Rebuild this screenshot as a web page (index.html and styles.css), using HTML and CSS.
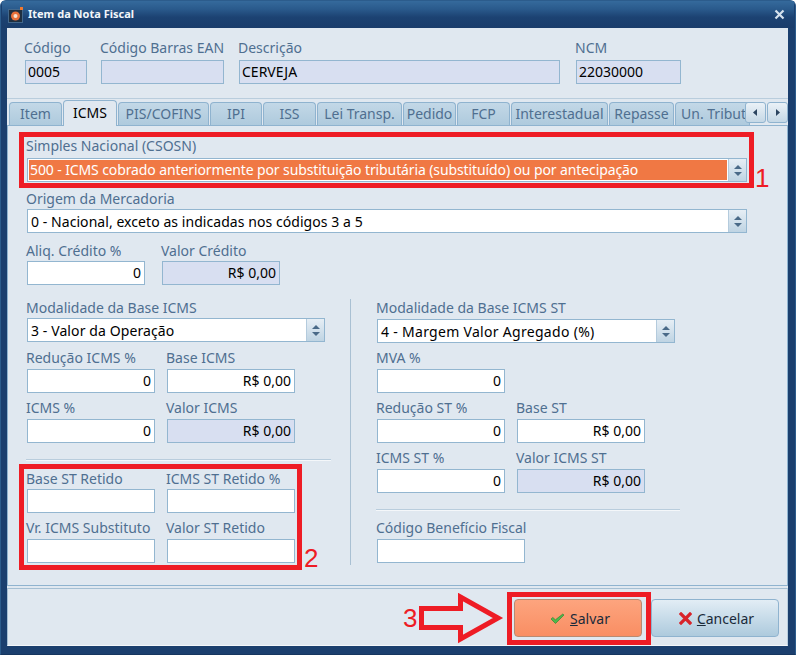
FILE: index.html
```html
<!DOCTYPE html>
<html lang="pt">
<head>
<meta charset="utf-8">
<title>Item da Nota Fiscal</title>
<link rel="stylesheet" href="styles.css">
</head>
<body>
<div class="window">
  <div class="titlebar">
    <svg class="app-icon" width="16" height="16" viewBox="0 0 16 16"><rect x="0.500" y="2.500" width="14" height="13" fill="#1f2f40" stroke="#43688c"/><circle cx="7.500" cy="9" r="4.500" fill="#e8703a"/><circle cx="7.500" cy="9" r="2" fill="#f6e2d0"/><rect x="12" y="0" width="3" height="3" fill="#f0792f"/></svg>
    <span class="title-text">Item da Nota Fiscal</span>
    <svg class="close-icon" width="11" height="11" viewBox="0 0 11 11"><path d="M1.500 1.500l8 8M9.500 1.500l-8 8" stroke="#d6e2ee" stroke-width="2.200" fill="none"/></svg>
  </div>
  <div class="client">
    <div class="header">
      <div class="field gap4 w-cod"><label>Código</label><div class="input ro">0005</div></div>
      <div class="field gap4 w-ean"><label>Código Barras EAN</label><div class="input ro"></div></div>
      <div class="field gap4 w-desc"><label>Descrição</label><div class="input ro">CERVEJA</div></div>
      <div class="field gap4 w-ncm"><label>NCM</label><div class="input ro">22030000</div></div>
    </div>
    <div class="tabstrip">
      <div class="tab t1">Item</div>
      <div class="tab active t2">ICMS</div>
      <div class="tab t3">PIS/COFINS</div>
      <div class="tab t4">IPI</div>
      <div class="tab t5">ISS</div>
      <div class="tab t6">Lei Transp.</div>
      <div class="tab t7">Pedido</div>
      <div class="tab t8">FCP</div>
      <div class="tab t9">Interestadual</div>
      <div class="tab t10">Repasse</div>
      <div class="tab t11">Un. Tribut</div>
      <div class="scrollers">
        <div class="scroll-btn"><svg width="5" height="7" viewBox="0 0 5 7"><path d="M4 0v7L0 3.500z" fill="#2c4560"/></svg></div>
        <div class="scroll-btn"><svg width="5" height="7" viewBox="0 0 5 7"><path d="M1 0v7l4-3.500z" fill="#2c4560"/></svg></div>
      </div>
    </div>
    <div class="panel">
      <div class="field gap4">
        <label>Simples Nacional (CSOSN)</label>
        <div class="combo orange w-full"><span class="combo-text">500 - ICMS cobrado anteriormente por substituição tributária (substituído) ou por antecipação</span><span class="spin"><svg width="8" height="11" viewBox="0 0 8 11"><path d="M4 0l4 4H0zM4 11L0 7h8z" fill="#4a6a88"/></svg></span></div>
      </div>
      <div class="field gap2 m-origem">
        <label>Origem da Mercadoria</label>
        <div class="combo w-full"><span class="combo-text ls-origem">0 - Nacional, exceto as indicadas nos códigos 3 a 5</span><span class="spin"><svg width="8" height="11" viewBox="0 0 8 11"><path d="M4 0l4 4H0zM4 11L0 7h8z" fill="#4a6a88"/></svg></span></div>
      </div>
      <div class="row m-aliq">
        <div class="field gap2 w-118"><label>Aliq. Crédito %</label><div class="input num">0</div></div>
        <div class="field gap2 w-118 ml-17"><label>Valor Crédito</label><div class="input ro num">R$ 0,00</div></div>
      </div>
      <div class="split">
        <div class="col">
          <div class="field gap2">
            <label>Modalidade da Base ICMS</label>
            <div class="combo w-298"><span class="combo-text ls-valor">3 - Valor da Operação</span><span class="spin"><svg width="8" height="11" viewBox="0 0 8 11"><path d="M4 0l4 4H0zM4 11L0 7h8z" fill="#4a6a88"/></svg></span></div>
          </div>
          <div class="row m-8">
            <div class="field w-128"><label>Redução ICMS %</label><div class="input num">0</div></div>
            <div class="field w-128 ml-12"><label>Base ICMS</label><div class="input num">R$ 0,00</div></div>
          </div>
          <div class="row m-7">
            <div class="field w-128"><label>ICMS %</label><div class="input num">0</div></div>
            <div class="field w-128 ml-12"><label>Valor ICMS</label><div class="input ro num">R$ 0,00</div></div>
          </div>
          <div class="rule left-rule"></div>
          <div class="row m-rule">
            <div class="field gap2 w-128"><label>Base ST Retido</label><div class="input"></div></div>
            <div class="field gap2 w-128 ml-12"><label>ICMS ST Retido %</label><div class="input"></div></div>
          </div>
          <div class="row m-7">
            <div class="field w-128"><label>Vr. ICMS Substituto</label><div class="input"></div></div>
            <div class="field w-128 ml-12"><label>Valor ST Retido</label><div class="input"></div></div>
          </div>
        </div>
        <div class="divider"></div>
        <div class="col">
          <div class="field">
            <label>Modalidade da Base ICMS ST</label>
            <div class="combo w-298"><span class="combo-text ls-margem">4 - Margem Valor Agregado (%)</span><span class="spin"><svg width="8" height="11" viewBox="0 0 8 11"><path d="M4 0l4 4H0zM4 11L0 7h8z" fill="#4a6a88"/></svg></span></div>
          </div>
          <div class="field w-128 m-7"><label>MVA %</label><div class="input num">0</div></div>
          <div class="row m-7">
            <div class="field w-128"><label>Redução ST %</label><div class="input num">0</div></div>
            <div class="field w-128 ml-12"><label>Base ST</label><div class="input num">R$ 0,00</div></div>
          </div>
          <div class="row m-7">
            <div class="field w-128"><label>ICMS ST %</label><div class="input num">0</div></div>
            <div class="field w-128 ml-12"><label>Valor ICMS ST</label><div class="input ro num">R$ 0,00</div></div>
          </div>
          <div class="rule right-rule"></div>
          <div class="field w-148 m-right-rule"><label>Código Benefício Fiscal</label><div class="input"></div></div>
        </div>
      </div>
    </div>
    <div class="footer">
      <div class="btn save">
        <svg width="15" height="11" viewBox="0 0 15 11"><path d="M1 6l1.800-1.600 2.600 2.400L12.800 1 14 2 5.500 10.500z" fill="#4fb84a" stroke="#2a7d30" stroke-width="0.600"/></svg>
        <span><u>S</u>alvar</span>
      </div>
      <div class="btn cancel">
        <svg width="13" height="13" viewBox="0 0 13 13"><path d="M2 2l9 9M11 2l-9 9" stroke="#d8232a" stroke-width="3.200" stroke-linecap="square" fill="none"/></svg>
        <span><u>C</u>ancelar</span>
      </div>
    </div>
  </div>
  <div class="mark box1"></div>
  <div class="mark box2"></div>
  <div class="mark box3"></div>
  <span class="mark-num n1">1</span>
  <span class="mark-num n2">2</span>
  <span class="mark-num n3">3</span>
  <svg class="arrow" width="86" height="52" viewBox="0 0 86 52"><path d="M2.500 15.500H41.500V4L79 25 41.500 46V34.500H2.500z" fill="none" stroke="#ee1c25" stroke-width="5"/></svg>
</div>
</body>
</html>
```
FILE: styles.css
```css
* { box-sizing: border-box; }
html, body { margin: 0; padding: 0; }
body { width: 796px; height: 655px; overflow: hidden; font-family: "Noto Sans", "DejaVu Sans", sans-serif; font-size: 14px; }
.window { position: relative; width: 796px; height: 655px; background: #1b3f6e; display: flex; flex-direction: column; padding: 0 8px 8px 7px; border-radius: 6px 6px 0 0; border: 1px solid #2c5c8c; border-bottom-color: #16365f; }
.titlebar { height: 27px; margin: 0 -7px 0 -6px; padding: 0 9px 0 6px; display: flex; align-items: center; gap: 4px; background: linear-gradient(#356a9c 0, #2a5a8c 30%, #1c4272 60%, #1a3d6b 100%); flex: none; }
.title-text { font: bold 11px "Noto Sans", sans-serif; color: #f2f6fa; flex: 1; padding-bottom: 2px; }
.app-icon { flex: none; }
.close-icon { flex: none; }
.client { background: #e0e8f0; flex: 1; display: flex; flex-direction: column; margin-left: -1px; width: 781px; }
.header { height: 70px; flex: none; display: flex; padding: 12px 0 0 17px; }
.field { display: flex; flex-direction: column; gap: 3px; }
.gap2 { gap: 2px; }
.gap4 { gap: 4px; }
label { display: block; height: 16px; line-height: 15px; color: #4f6f90; white-space: nowrap; }
.input { height: 24px; line-height: 22px; margin-left: 1px; border: 1px solid #93b6d0; background: #fff; color: #000; padding: 0 3px 0 2px; white-space: nowrap; overflow: hidden; }
.ro { background: #d8dff1; }
.num { text-align: right; }
.w-cod { width: 63px; }
.w-ean { width: 124px; margin-left: 13px; }
.w-desc { width: 322px; margin-left: 14px; }
.w-ncm { width: 106px; margin-left: 15px; }
.tabstrip { height: 27px; flex: none; position: relative; display: flex; align-items: flex-end; padding-left: 2px; border-top: 1px solid #b9cddd; width: 781px; z-index: 1; }
.tab { height: 23px; line-height: 22px; text-align: center; color: #4f6f90; background: linear-gradient(#c3d8e7, #aecadd); border: 1px solid #8fb3cf; border-bottom: none; border-radius: 4px 4px 0 0; margin-right: 1px; white-space: nowrap; overflow: hidden; flex: none; }
.tab.active { line-height: 24px; background: #e0e8f0; color: #000; margin-bottom: -1px; height: 26px; padding-bottom: 2px; }
.t1 { width: 53px; }
.t2 { width: 54px; }
.t3 { width: 91px; }
.t4 { width: 52px; }
.t5 { width: 53px; }
.t6 { width: 85px; }
.t7 { width: 53px; }
.t8 { width: 53px; }
.t9 { width: 97px; }
.t10 { width: 65px; }
.t11 { width: 75px; text-align: left; padding-left: 5px; }
.scrollers { position: absolute; right: 0; top: 3px; display: flex; gap: 1px; }
.scroll-btn { width: 21px; height: 21px; border: 1px solid #8fb3cf; border-radius: 3px; background: linear-gradient(#eaf1f7, #c5d8e6); display: flex; align-items: center; justify-content: center; }
.panel { height: 461px; flex: none; border: 1px solid #8fb3cf; padding: 12px 0 0 18px; }
.combo { height: 24px; margin-left: 1px; border: 1px solid #93b6d0; background: #fff; display: flex; color: #000; }
.combo-text { flex: 1; line-height: 20px; padding: 2px 0 0 3px; white-space: nowrap; overflow: hidden; }
.spin { width: 18px; flex: none; border-left: 1px solid #b4cbdd; background: linear-gradient(#e6eef5, #bfd4e3); display: flex; align-items: center; justify-content: center; }
.orange .combo-text { background: #f07844; color: #fff; border: 1px solid #fff; padding: 1px 0 0 1px; line-height: 18px; letter-spacing: -0.11px; }
.ls-origem { letter-spacing: 0.06px; }
.ls-valor { letter-spacing: 0.1px; }
.ls-margem { letter-spacing: 0.3px; }
.w-full { width: 720px; }
.w-298 { width: 298px; }
.m-origem { margin-top: 9px; }
.m-aliq { margin-top: 10px; }
.row { display: flex; }
.w-118 { width: 119px; }
.ml-17 { margin-left: 16px; }
.w-128 { width: 129px; }
.ml-12 { margin-left: 11px; }
.w-148 { width: 149px; }
.split { display: flex; margin-top: 15px; }
.col { width: 306px; }
.divider { width: 1px; background: #a9c0d3; height: 266px; margin: -1px 25px 0 18px; }
.m-7 { margin-top: 7px; }
.m-8 { margin-top: 8px; }
.rule { height: 2px; background: #b9cddd; border-bottom: 1px solid #f4f7fa; }
.left-rule { margin-top: 16px; width: 305px; }
.m-rule { margin-top: 10px; }
.right-rule { margin-top: 16px; width: 304px; }
.m-right-rule { margin-top: 9px; }
.footer { flex: 1; margin-top: 2px; border: 1px solid #a5bfd3; border-bottom-color: #f4f7fa; border-right-color: #b9cddd; display: flex; justify-content: flex-end; align-items: center; gap: 9px; padding: 2px 8px 0 0; }
.btn { width: 128px; height: 38px; border-radius: 4px; display: flex; align-items: center; justify-content: center; gap: 5px; color: #1a2a3a; }
.save { background: linear-gradient(#fda47e, #f98e63); border: 1px solid #b88a72; padding-left: 4px; }
.cancel { background: linear-gradient(#e2edf5, #adcadd); border: 1px solid #8fb3cf; padding-left: 3px; }
.mark { position: absolute; border: 5px solid #ee1c25; }
.box1 { left: 18px; top: 131px; width: 735px; height: 56px; }
.box2 { left: 18px; top: 463px; width: 283px; height: 106px; }
.box3 { left: 506px; top: 591px; width: 144px; height: 53px; }
.mark-num { position: absolute; color: #ee1c25; font: 26px "Liberation Sans", sans-serif; line-height: 30px; }
.n1 { left: 754px; top: 162px; }
.n2 { left: 303px; top: 542px; }
.n3 { left: 402px; top: 602px; }
.arrow { position: absolute; left: 418px; top: 592px; }
```
